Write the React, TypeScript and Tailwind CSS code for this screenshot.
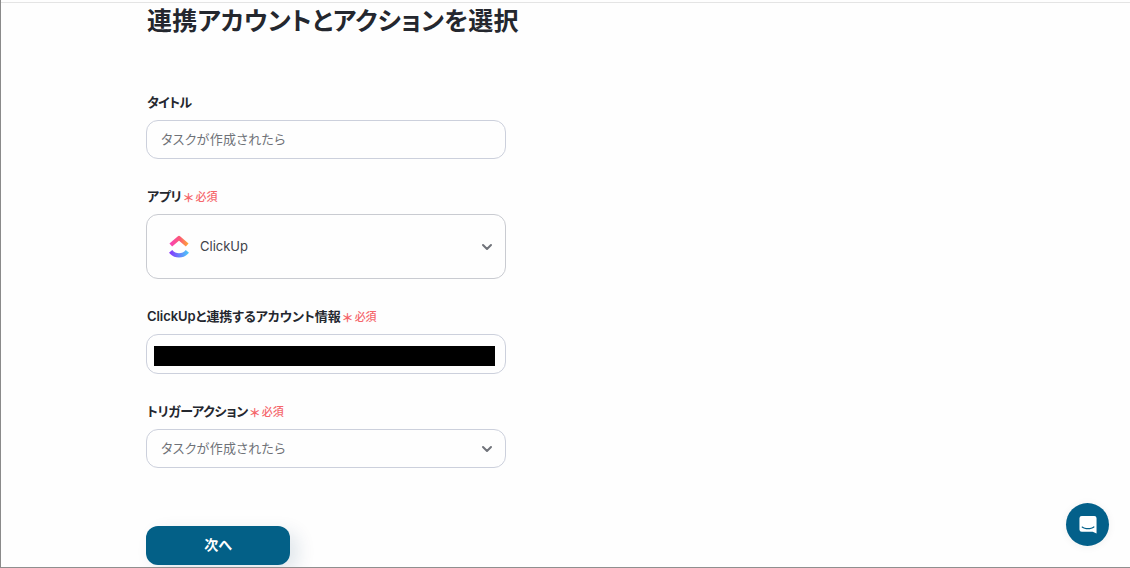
const fontStack = { fontFamily: '"Inter", "Noto Sans CJK JP", sans-serif' }

function Required() {
  return (
    <span className="flex items-center text-[11px] font-medium leading-none tracking-normal text-[#f5666b] [font-feature-settings:'normal']">
      <span className="ml-[1px] mt-[4px] w-[12px] text-center text-[12px] font-bold leading-none">＊</span>
      <span className="ml-[1px] mt-[1px]">必須</span>
    </span>
  )
}

function Chevron() {
  return (
    <svg width="12" height="8" viewBox="0 0 12 8" fill="none" className="mt-[1px]">
      <path d="M2 2 6 6l4-4" stroke="#70737a" strokeWidth="2" strokeLinecap="round" strokeLinejoin="round" />
    </svg>
  )
}

function ClickUpLogo() {
  return (
    <svg width="20" height="24" viewBox="0 0 20 24" fill="none">
      <defs>
        <linearGradient id="cu-top" x1="0" y1="0" x2="20" y2="0" gradientUnits="userSpaceOnUse">
          <stop offset="0" stopColor="#f93ec0" />
          <stop offset="0.55" stopColor="#fb5a74" />
          <stop offset="1" stopColor="#ffb02e" />
        </linearGradient>
        <linearGradient id="cu-bottom" x1="0" y1="0" x2="20" y2="0" gradientUnits="userSpaceOnUse">
          <stop offset="0" stopColor="#8930fd" />
          <stop offset="1" stopColor="#49ccf9" />
        </linearGradient>
      </defs>
      <path d="M1.800 10 10 3l8.200 7" stroke="url(#cu-top)" strokeWidth="4.200" strokeLinejoin="round" />
      <path d="M1.600 16.400c2.200 2.600 5.100 4 8.400 4s6.200-1.400 8.400-4" stroke="url(#cu-bottom)" strokeWidth="4.200" />
    </svg>
  )
}

export default function App() {
  return (
    <div
      className="relative flex h-[568px] w-[1130px] flex-col overflow-hidden border-b border-l border-b-[#8f8f8f] border-l-[#8a8a8a] bg-[#fefefe] pl-[145px] text-[#24272e] [font-feature-settings:'palt']"
      style={fontStack}
    >
      <div className="absolute left-0 right-0 top-[2px] h-px bg-[#e4e4e4]" />

      <h1 className="ml-px mt-[4px] h-[35px] text-[25px] font-bold leading-[35px] tracking-[0.14px]">
        連携アカウントとアクションを選択
      </h1>

      <label className="ml-px mt-[55px] flex h-[17px] items-center text-[13px] font-semibold leading-none tracking-[-0.7px]">タイトル</label>
      <div className="mt-[9px] flex h-[39px] w-[360px] items-center rounded-xl border border-[#ccd0dc] px-[14px] text-[13px] tracking-[0.3px] text-[#6f7278]">
        タスクが作成されたら
      </div>

      <div className="ml-px mt-[29px] flex h-[17px] items-center text-[13px] font-semibold leading-none tracking-[-0.3px]">
        アプリ
        <Required />
      </div>
      <div className="mt-[9px] flex h-[65px] w-[360px] items-center justify-between rounded-xl border border-[#c9cbd1] pl-[22px] pr-[12px]">
        <div className="flex items-center gap-[11px]">
          <ClickUpLogo />
          <span className="text-[13px] text-[#3f4249]">ClickUp</span>
        </div>
        <Chevron />
      </div>

      <div className="ml-px mt-[29px] flex h-[17px] items-center text-[13px] font-semibold leading-none tracking-[-0.06px]">
        ClickUpと連携するアカウント情報
        <Required />
      </div>
      <div className="mt-[9px] flex h-[40px] w-[360px] items-start rounded-xl border border-[#ccd0dc] pl-[7px] pt-[11px]">
        <div className="h-[20px] w-[341px] bg-black" />
      </div>

      <div className="ml-px mt-[29px] flex h-[17px] items-center text-[13px] font-semibold leading-none tracking-[-0.35px]">
        トリガーアクション
        <Required />
      </div>
      <div className="mt-[9px] flex h-[39px] w-[360px] items-center justify-between rounded-xl border border-[#ccd0dc] pl-[14px] pr-[12px] text-[13px] tracking-[0.3px] text-[#6f7278]">
        タスクが作成されたら
        <Chevron />
      </div>

      <button className="mt-[58px] flex h-[39px] w-[144px] shrink-0 items-center justify-center rounded-xl bg-[#036087] pb-[2px] text-[14px] font-bold text-white shadow-[8px_6px_18px_rgba(3,60,100,0.12)]">
        次へ
      </button>

      {/* chat launcher */}
      <div className="absolute left-[1065px] top-[503px] flex h-[43px] w-[43px] items-center justify-center rounded-full bg-[#03608a] shadow-[0_1px_8px_rgba(0,0,0,0.06)]">
        <svg width="18" height="20" viewBox="0 0 20 22">
          <path
            fillRule="evenodd"
            fill="#fff"
            d="M3 1h14a2.500 2.500 0 0 1 2.500 2.500V20.500l-4.300-2H3A2.500 2.500 0 0 1 .5 16V3.500A2.500 2.500 0 0 1 3 1Zm.6 11.600a.7.7 0 0 0-.5 1.200c1.700 1.400 4.100 2 6.900 2s5.200-.6 6.900-2a.7.7 0 0 0-.9-1.100c-1.400 1.100-3.500 1.700-6 1.700s-4.600-.6-6-1.700a.7.7 0 0 0-.4-.1Z"
          />
        </svg>
      </div>
    </div>
  )
}
